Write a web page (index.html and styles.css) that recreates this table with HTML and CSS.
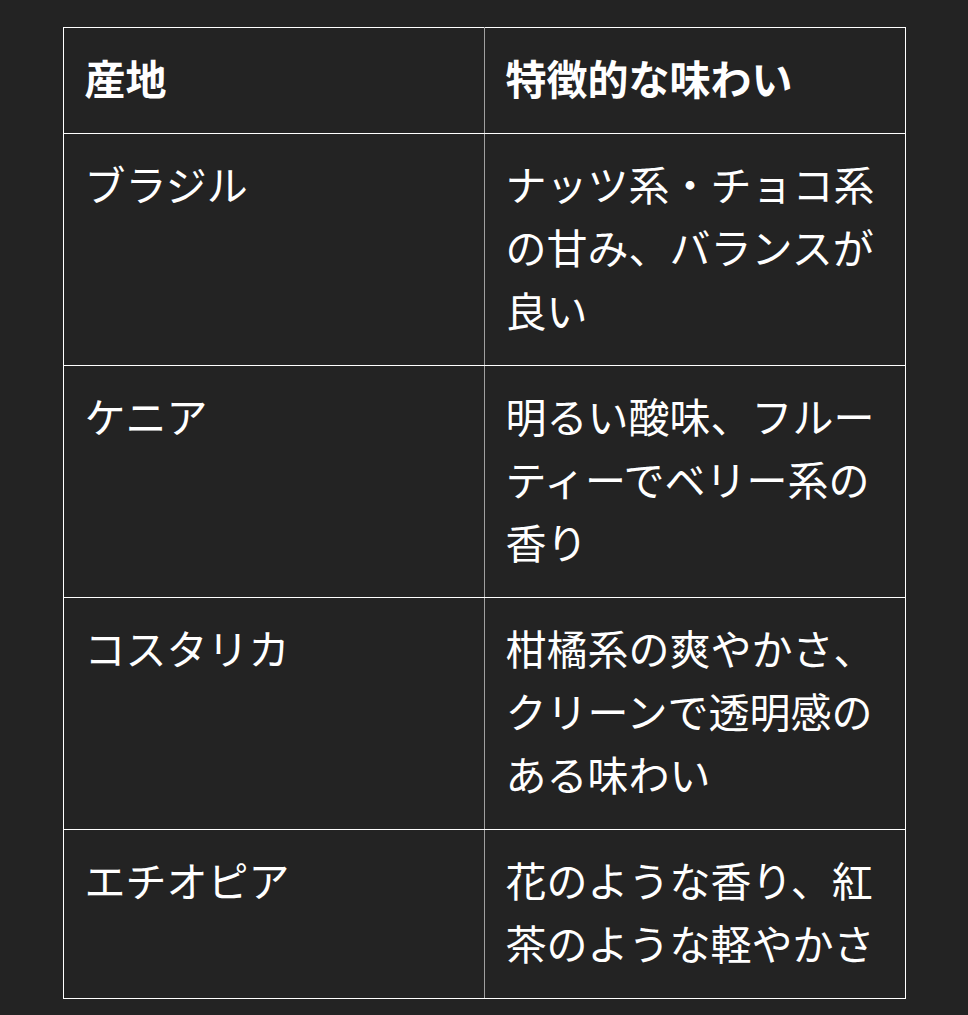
FILE: index.html
```html
<!DOCTYPE html>
<html lang="ja">
<head>
<meta charset="utf-8">
<link rel="stylesheet" href="styles.css">
</head>
<body>
<table class="origin-table">
  <colgroup><col class="c1"><col class="c2"></colgroup>
  <thead>
    <tr><th class="col-a">産地</th><th class="col-b">特徴的な味わい</th></tr>
  </thead>
  <tbody>
    <tr><td class="col-a">ブラジル</td><td class="col-b">ナッツ系・チョコ系の甘み、バランスが良い</td></tr>
    <tr><td class="col-a">ケニア</td><td class="col-b">明るい酸味、フルーティーでベリー系の香り</td></tr>
    <tr><td class="col-a">コスタリカ</td><td class="col-b">柑橘系の爽やかさ、クリーンで透明感のある味わい</td></tr>
    <tr><td class="col-a">エチオピア</td><td class="col-b">花のような香り、紅茶のような軽やかさ</td></tr>
  </tbody>
</table>
</body>
</html>
```
FILE: styles.css
```css
html, body {
  margin: 0;
  padding: 0;
  background: #232323;
}
body {
  padding-top: 27px;
  font-family: "Noto Sans CJK JP", "Noto Sans", sans-serif;
  color: #ffffff;
}
.origin-table {
  margin: 0 auto;
  width: 842px;
  border-collapse: collapse;
  table-layout: fixed;
  border: 1px solid #ffffff;
}
.origin-table .c1,
.origin-table .c2 {
  width: 421px;
}
.origin-table th,
.origin-table td {
  border-top: 1px solid #ffffff;
  border-bottom: 1px solid #ffffff;
  padding: 18px 22px 24px 21px;
  font-size: 41px;
  line-height: 63px;
  text-align: left;
  vertical-align: top;
  word-break: break-all;
}
.origin-table th {
  font-weight: 700;
}
.origin-table td {
  font-weight: 400;
}
.origin-table .col-a {
  border-right: 1px solid #a0a0a0;
}
.origin-table .col-b {
  border-right: 1px solid #ffffff;
}
```
